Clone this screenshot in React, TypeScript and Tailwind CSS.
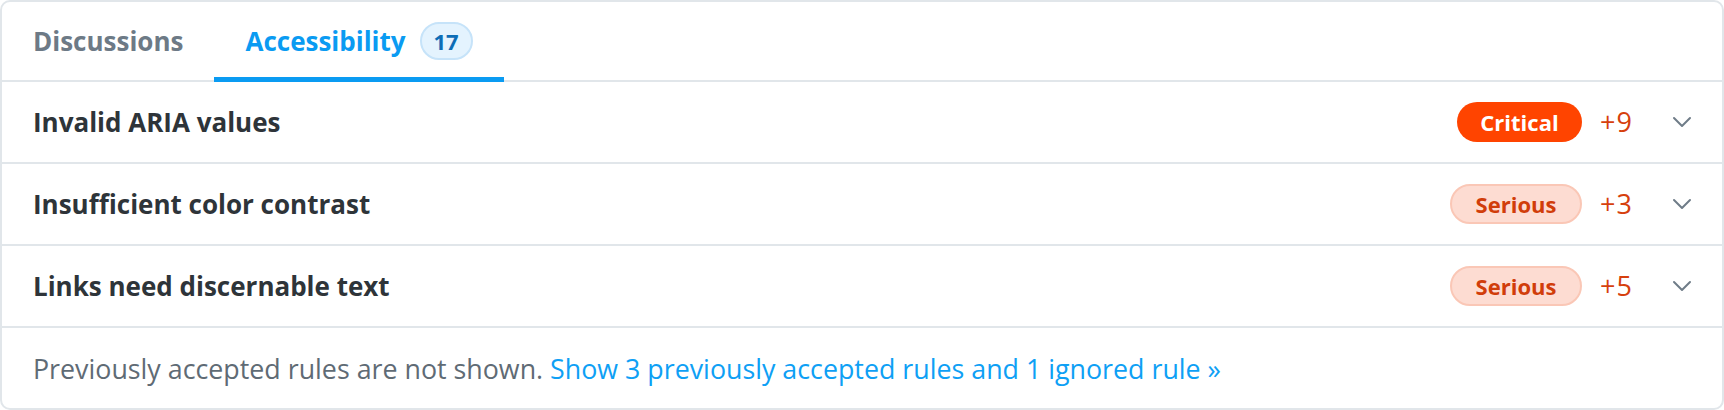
import { ChevronDown } from 'lucide-react';

type Rule = {
  title: string;
  impact: 'Critical' | 'Serious';
  count: number;
};

const rules: Rule[] = [
  { title: 'Invalid ARIA values', impact: 'Critical', count: 9 },
  { title: 'Insufficient color contrast', impact: 'Serious', count: 3 },
  { title: 'Links need discernable text', impact: 'Serious', count: 5 },
];

function ImpactBadge({ impact }: { impact: Rule['impact'] }) {
  if (impact === 'Critical') {
    return (
      <span className="inline-flex h-[40px] w-[125px] items-center justify-center rounded-full bg-[#ff4400] text-[22px] font-bold text-white">
        Critical
      </span>
    );
  }
  return (
    <span className="inline-flex h-[40px] w-[132px] items-center justify-center rounded-full border-2 border-[#fac7b6] bg-[#fddcd2] text-[22px] font-bold text-[#d13d0a]">
      Serious
    </span>
  );
}

function RuleRow({ rule }: { rule: Rule }) {
  return (
    <div className="flex h-[82px] items-center border-b-2 border-[#e1e6ea] pl-[31px] pr-[24px]">
      <span className="flex-1 text-[26px] font-bold text-[#2e3439]">{rule.title}</span>
      <ImpactBadge impact={rule.impact} />
      <span className="ml-[18px] w-[66px] text-[27px] tracking-[1px] text-[#d6400d]">+{rule.count}</span>
      <ChevronDown className="h-[32px] w-[32px] text-[#6f7c88]" strokeWidth={1.5} aria-hidden />
    </div>
  );
}

export default function App() {
  return (
    <div className="h-[410px] w-[1724px] bg-white font-['Open_Sans',sans-serif]">
      <div className="flex h-full flex-col overflow-hidden rounded-[10px] border-2 border-[#e1e6ea]">
        <div className="flex h-[80px] shrink-0 border-b-2 border-[#e1e6ea]">
          <button
            type="button"
            className="flex items-center px-[31px] text-[26px] font-bold text-[#6d7a86]"
          >
            Discussions
          </button>
          <button
            type="button"
            className="relative flex items-center gap-[14px] px-[31px] text-[26px] font-bold text-[#0a9bf2]"
          >
            Accessibility
            <span className="inline-flex h-[38px] w-[53px] items-center justify-center rounded-full border-2 border-[#c6e3f9] bg-[#e4f3fe] text-[22px] font-bold text-[#0d6db6]">
              17
            </span>
            <span className="absolute bottom-[-2px] left-0 right-0 h-[5px] bg-[#0a9bf2]" />
          </button>
        </div>
        {rules.map((rule) => (
          <RuleRow key={rule.title} rule={rule} />
        ))}
        <div className="flex flex-1 items-center pl-[31px] pt-[2px] text-[26.8px] text-[#5f6b75]">
          <p>
            Previously accepted rules are not shown.{' '}
            <a href="#" className="text-[#0ea0f5]">
              Show 3 previously accepted rules and 1 ignored rule »
            </a>
          </p>
        </div>
      </div>
    </div>
  );
}
